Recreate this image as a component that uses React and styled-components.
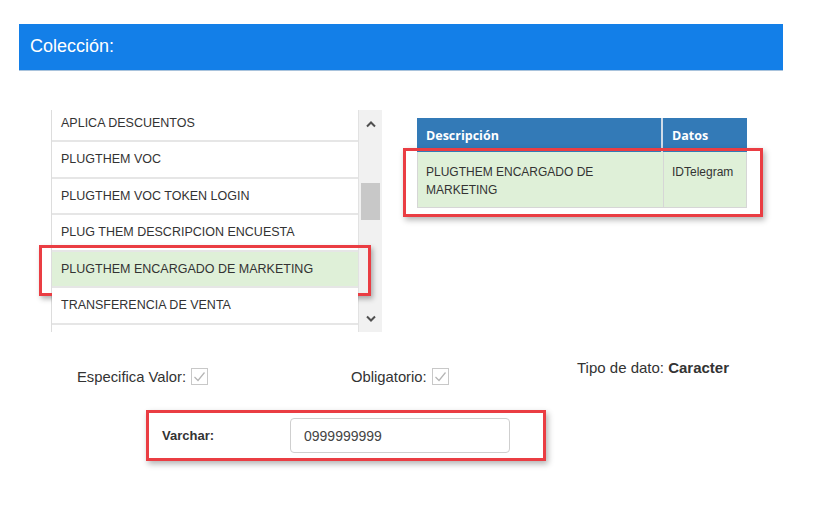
import React from 'react';
import styled, { createGlobalStyle } from 'styled-components';

const GlobalStyle = createGlobalStyle`
  body {
    margin: 0;
    background: #fff;
    font-family: "Liberation Sans", Arial, sans-serif;
    color: #333;
  }
`;

const Page = styled.div`
  width: 817px;
  height: 529px;
  padding: 24px 0 0 19px;
  box-sizing: border-box;
`;

const Header = styled.div`
  width: 764px;
  height: 47px;
  background: #137fe8;
  border-bottom: 1px solid #a9c3dc;
  display: flex;
  align-items: center;
  padding: 0 0 1px 11px;
  box-sizing: border-box;
  color: #fff;
  font-size: 18px;
`;

const Content = styled.div`
  padding: 39px 0 0 32px;
`;

const TopRow = styled.div`
  display: flex;
  align-items: flex-start;
`;

const ListPanel = styled.div`
  display: flex;
  width: 331px;
  height: 222px;
`;

const Items = styled.div`
  flex: 1;
  border-left: 1px solid #ddd;
  border-right: 1px solid #e2e2e2;
`;

const Item = styled.div`
  position: relative;
  height: ${p => p.$height || 36.5}px;
  box-sizing: border-box;
  display: flex;
  align-items: center;
  padding: 0 0 ${p => p.$lift || 0}px 9px;
  border-bottom: ${p => (p.$last ? 'none' : '2px solid #e6e6e6')};
  background: ${p => (p.$selected ? '#dff0d8' : '#fff')};
  font-size: 12.5px;
  color: #333;
  white-space: nowrap;

  ${p => p.$marked && `
    &::after {
      content: '';
      position: absolute;
      left: -13px;
      right: -13px;
      top: -7px;
      bottom: -10px;
      border: 3px solid #ea3d43;
      box-shadow: 2px 3px 5px rgba(0, 0, 0, 0.3);
      pointer-events: none;
    }
  `}
`;

const Scrollbar = styled.div`
  width: 23px;
  background: #f1f1f1;
  display: flex;
  flex-direction: column;
  align-items: center;
`;

const Arrow = styled.div`
  height: 28px;
  display: flex;
  align-items: center;
  justify-content: center;
  color: #505050;
`;

const Track = styled.div`
  flex: 1;
  width: 100%;
  padding: 45px 2px 0;
  box-sizing: border-box;
`;

const Thumb = styled.div`
  height: 37px;
  background: #c8c8c8;
`;

const DataTable = styled.div`
  width: 330px;
  margin: 8px 0 0 35px;
  font-size: 12px;
`;

const HeadRow = styled.div`
  display: grid;
  grid-template-columns: 246px 1fr;
  background: #337ab7;
  height: 34px;
`;

const HeadCell = styled.div`
  display: flex;
  align-items: center;
  padding-left: 9px;
  color: #fff;
  font-family: "Open Sans", "Liberation Sans", sans-serif;
  font-weight: 700;
  font-size: 12.5px;
  border-right: ${p => (p.$divider ? '2px solid #cfdbe8' : 'none')};
`;

const BodyRow = styled.div`
  position: relative;
  display: grid;
  grid-template-columns: 246px 1fr;
  background: #dff0d8;
  height: 56px;
  border: 1px solid #d6d6d6;
  border-top: none;
  box-sizing: border-box;

  &::after {
    content: '';
    position: absolute;
    left: -15px;
    right: -17px;
    top: -4px;
    bottom: -10px;
    border: 3px solid #ea3d43;
    box-shadow: 2px 3px 6px rgba(0, 0, 0, 0.3);
    pointer-events: none;
  }
`;

const BodyCell = styled.div`
  padding: 11px 8px 0 8px;
  line-height: 18px;
  color: #333;
  border-right: ${p => (p.$divider ? '1px solid #d6d6d6' : 'none')};
`;

const OptionsRow = styled.div`
  display: flex;
  align-items: flex-start;
  padding-left: 26px;
  margin-top: 36px;
  font-size: 14.8px;
  color: #333;
`;

const Option = styled.div`
  width: ${p => p.$width}px;
  display: flex;
  align-items: center;
  gap: 5px;
`;

const TypeLabel = styled.div`
  margin-top: -9px;
  font-size: 15px;

  b {
    font-weight: 700;
  }
`;

const VarcharBox = styled.div`
  width: 400px;
  height: 51px;
  margin: 25px 0 0 95px;
  border: 3px solid #ea3d43;
  box-sizing: border-box;
  box-shadow: 2px 3px 6px rgba(0, 0, 0, 0.3);
  display: flex;
  align-items: center;
  padding-left: 13px;
`;

const FieldLabel = styled.div`
  width: 128px;
  font-size: 13px;
  font-weight: 700;
`;

const TextInput = styled.div`
  width: 220px;
  height: 35px;
  box-sizing: border-box;
  border: 1px solid #cfcfcf;
  border-radius: 4px;
  display: flex;
  align-items: center;
  padding-left: 13px;
  font-size: 14px;
  color: #444;
`;

function CheckMark() {
  return (
    <svg width="17" height="17" viewBox="0 0 17 17">
      <rect x="0.5" y="0.5" width="16" height="16" fill="#fff" stroke="#c8c8c8" />
      <path d="M3.5 9 L7 12.5 L13.5 4.5" fill="none" stroke="#b4b4b4" strokeWidth="1.2" />
    </svg>
  );
}

function Chevron({ down }) {
  return (
    <svg width="10" height="7" viewBox="0 0 10 7">
      <path
        d={down ? 'M1 1.5 L5 5.5 L9 1.5' : 'M1 5.5 L5 1.5 L9 5.5'}
        fill="none"
        stroke="#505050"
        strokeWidth="2"
      />
    </svg>
  );
}

const items = [
  'PLUGTHEM VOC',
  'PLUGTHEM VOC TOKEN LOGIN',
  'PLUG THEM DESCRIPCION ENCUESTA',
];

export default function App() {
  return (
    <Page>
      <GlobalStyle />
      <Header>Colección:</Header>
      <Content>
        <TopRow>
          <ListPanel>
            <Items>
              <Item $height={32} $lift={4}>APLICA DESCUENTOS</Item>
              {items.map(name => (
                <Item key={name}>{name}</Item>
              ))}
              <Item $selected $marked>PLUGTHEM ENCARGADO DE MARKETING</Item>
              <Item>TRANSFERENCIA DE VENTA</Item>
              <Item $height={9} $last />
            </Items>
            <Scrollbar>
              <Arrow><Chevron /></Arrow>
              <Track><Thumb /></Track>
              <Arrow><Chevron down /></Arrow>
            </Scrollbar>
          </ListPanel>

          <DataTable>
            <HeadRow>
              <HeadCell $divider>Descripción</HeadCell>
              <HeadCell>Datos</HeadCell>
            </HeadRow>
            <BodyRow>
              <BodyCell $divider>PLUGTHEM ENCARGADO DE<br />MARKETING</BodyCell>
              <BodyCell>IDTelegram</BodyCell>
            </BodyRow>
          </DataTable>
        </TopRow>

        <OptionsRow>
          <Option $width={274}>Especifica Valor: <CheckMark /></Option>
          <Option $width={226}>Obligatorio: <CheckMark /></Option>
          <TypeLabel>Tipo de dato: <b>Caracter</b></TypeLabel>
        </OptionsRow>

        <VarcharBox>
          <FieldLabel>Varchar:</FieldLabel>
          <TextInput>0999999999</TextInput>
        </VarcharBox>
      </Content>
    </Page>
  );
}
